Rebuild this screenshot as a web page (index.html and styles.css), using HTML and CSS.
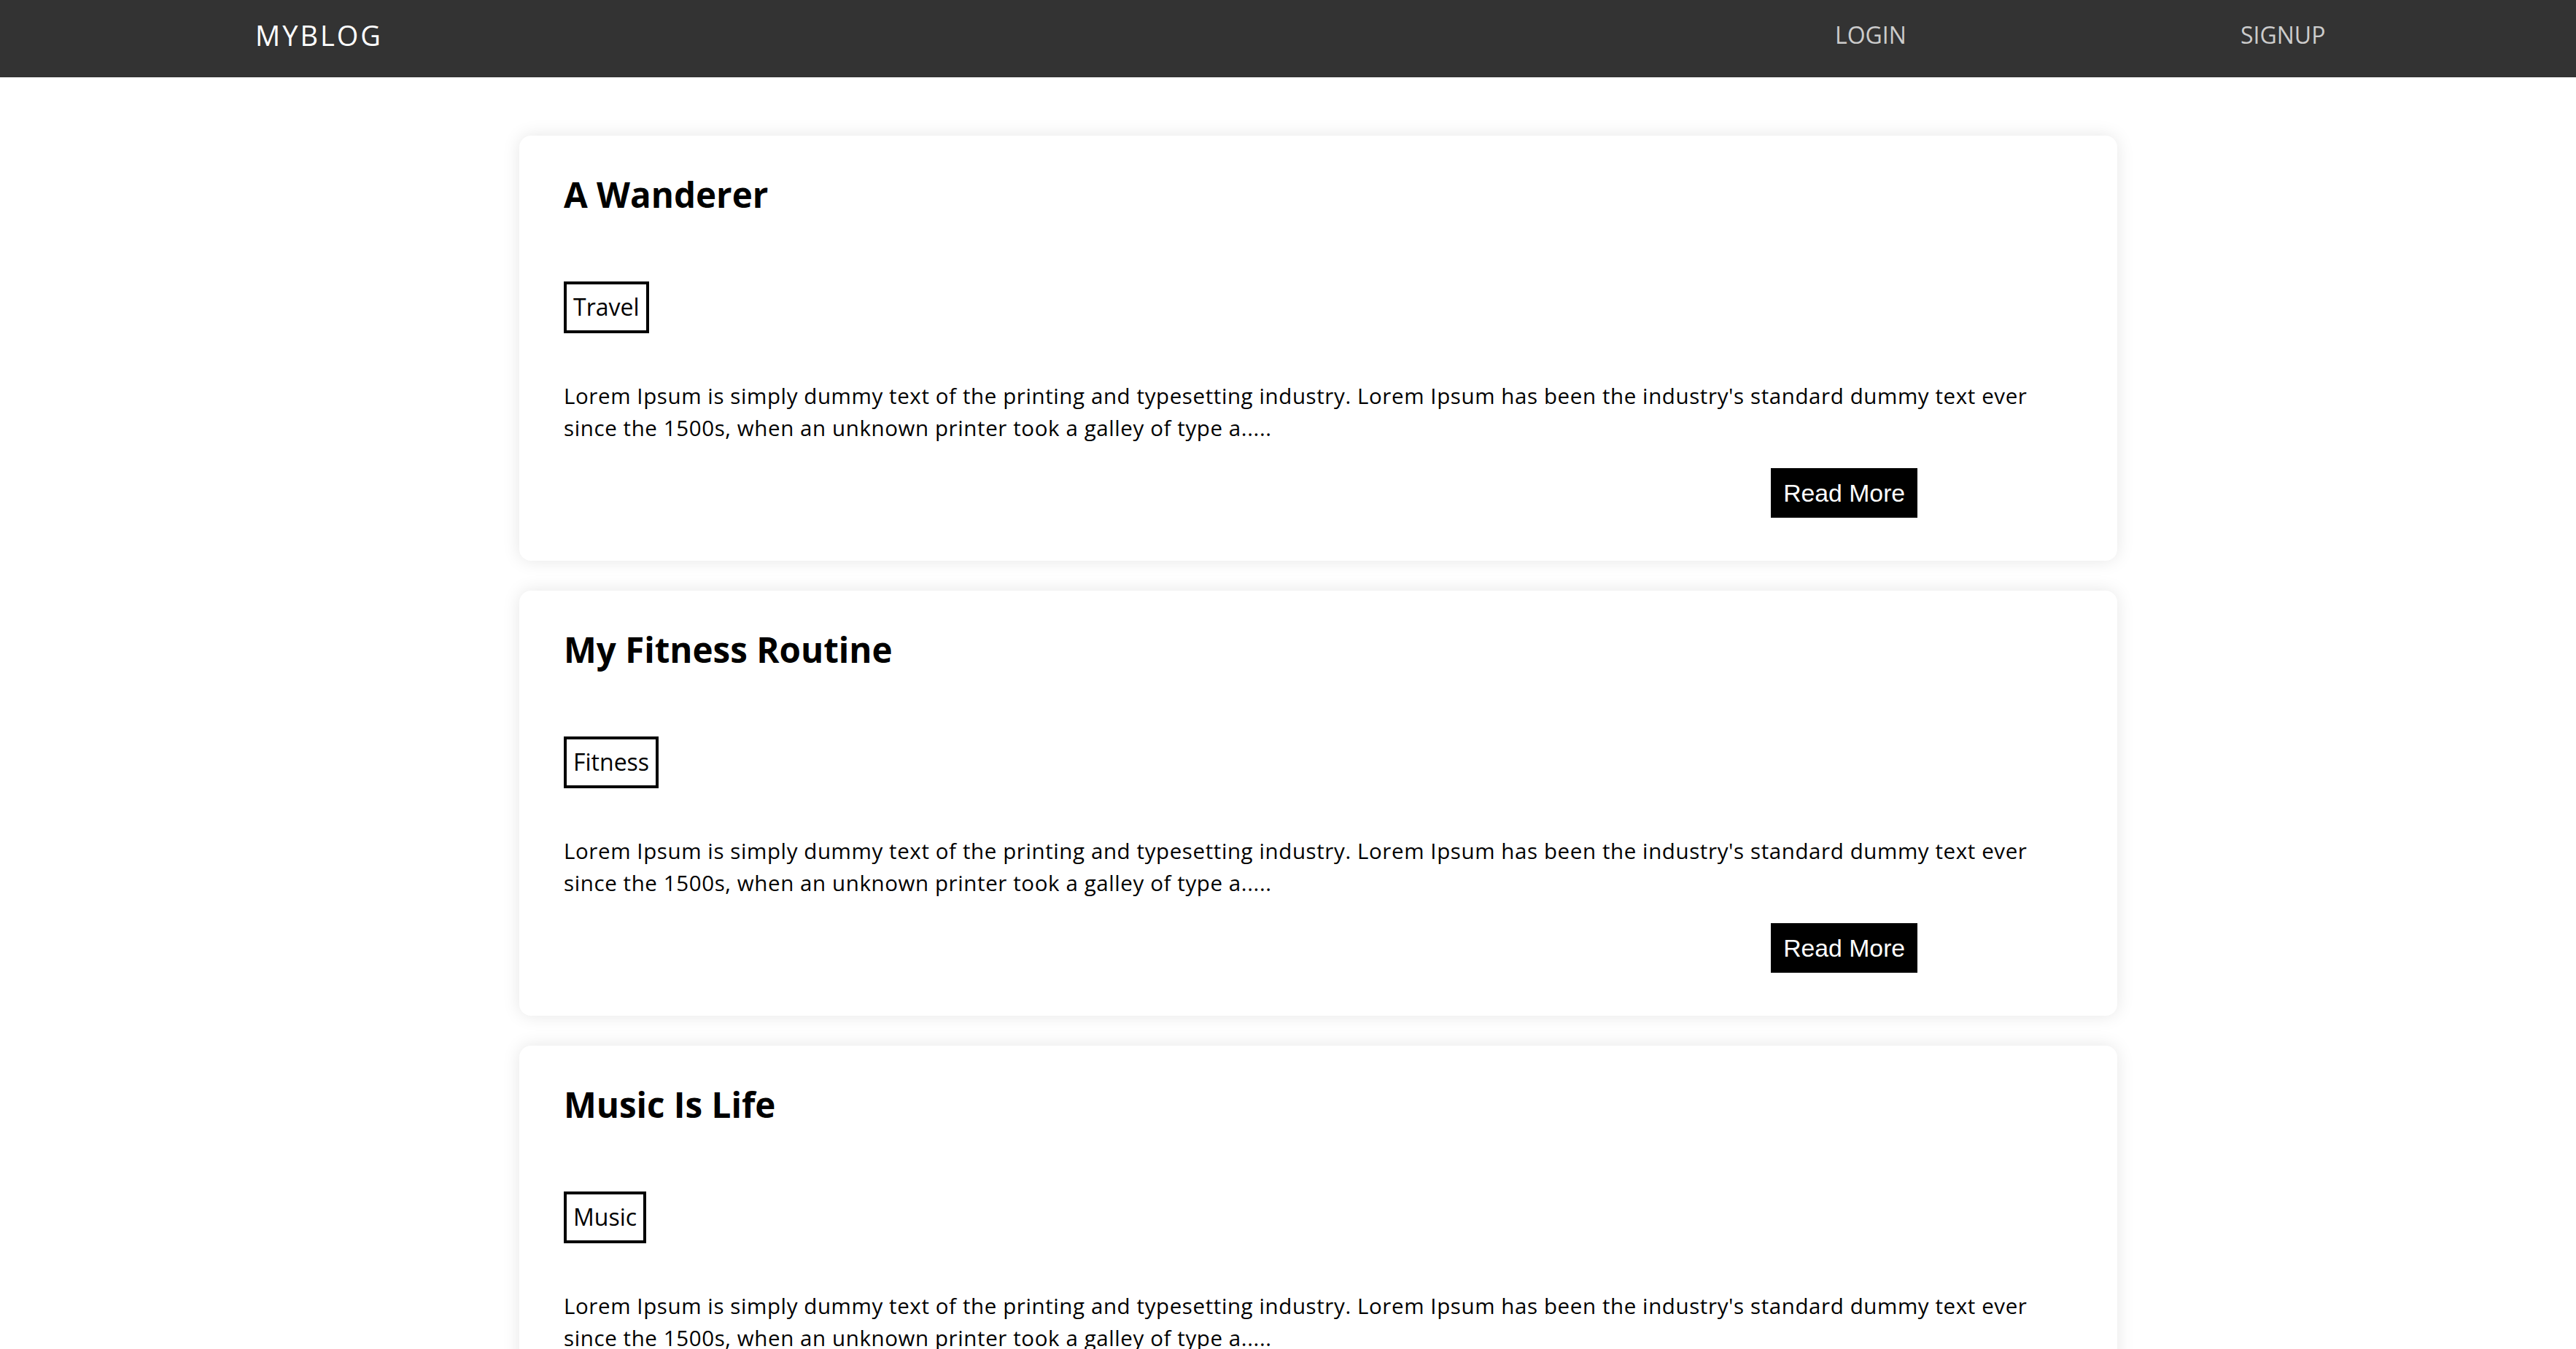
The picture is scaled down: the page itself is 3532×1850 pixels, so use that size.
FILE: index.html
```html
<!DOCTYPE html>
<html lang="en">
<head>
<meta charset="utf-8">
<title>MyBlog</title>
<link rel="stylesheet" href="styles.css">
</head>
<body>
<nav class="navbar">
  <a class="brand" href="#">MYBLOG</a>
  <div class="nav-links">
    <a class="nav-link" href="#">LOGIN</a>
    <a class="nav-link" href="#">SIGNUP</a>
  </div>
</nav>
<main class="posts">
  <article class="card">
    <h2 class="card-title">A Wanderer</h2>
    <span class="tag">Travel</span>
    <p class="excerpt">Lorem Ipsum is simply dummy text of the printing and typesetting industry. Lorem Ipsum has been the industry's standard dummy text ever since the 1500s, when an unknown printer took a galley of type a.....</p>
    <button class="read-more">Read More</button>
  </article>
  <article class="card">
    <h2 class="card-title">My Fitness Routine</h2>
    <span class="tag">Fitness</span>
    <p class="excerpt">Lorem Ipsum is simply dummy text of the printing and typesetting industry. Lorem Ipsum has been the industry's standard dummy text ever since the 1500s, when an unknown printer took a galley of type a.....</p>
    <button class="read-more">Read More</button>
  </article>
  <article class="card">
    <h2 class="card-title">Music Is Life</h2>
    <span class="tag">Music</span>
    <p class="excerpt">Lorem Ipsum is simply dummy text of the printing and typesetting industry. Lorem Ipsum has been the industry's standard dummy text ever since the 1500s, when an unknown printer took a galley of type a.....</p>
    <button class="read-more">Read More</button>
  </article>
</main>
</body>
</html>
```

FILE: styles.css
```css
* {
  box-sizing: border-box;
}

body {
  margin: 0;
  background: #ffffff;
  font-family: "Open Sans", Lato, sans-serif;
  color: #000000;
}

.navbar {
  display: flex;
  align-items: center;
  height: 106px;
  padding: 0 0 10px 350px;
  background: #333333;
}

.brand {
  font-size: 38px;
  line-height: 46px;
  color: #ffffff;
  text-decoration: none;
  letter-spacing: 3px;
}

.nav-links {
  margin-left: auto;
  display: grid;
  grid-template-columns: 556px 460px;
}

.nav-link {
  font-size: 32px;
  line-height: 40px;
  color: rgba(255, 255, 255, 0.75);
  text-decoration: none;
}

.posts {
  display: flex;
  flex-direction: column;
  gap: 41px;
  padding: 80px 0 60px 712px;
}

.card {
  width: 2191px;
  padding: 45px 61px 59px;
  background: #ffffff;
  border-radius: 16px;
  box-shadow: 0 0 24px rgba(0, 0, 0, 0.1);
}

.card-title {
  margin: 0 0 83px;
  font-size: 47.5px;
  line-height: 72px;
  font-weight: 700;
}

.tag {
  display: inline-block;
  padding: 8px 9px 10px;
  border: 4px solid #000000;
  font-size: 32px;
  line-height: 45px;
}

.excerpt {
  margin: 64px 0 33px;
  font-size: 29.5px;
  line-height: 44px;
  letter-spacing: 0.6px;
}

.read-more {
  display: block;
  margin-left: 80%;
  padding: 14px 17px;
  border: none;
  border-radius: 0;
  background: #000000;
  color: #ffffff;
  font-family: "Liberation Sans", Arial, sans-serif;
  font-size: 33.75px;
  line-height: 40px;
}
```
